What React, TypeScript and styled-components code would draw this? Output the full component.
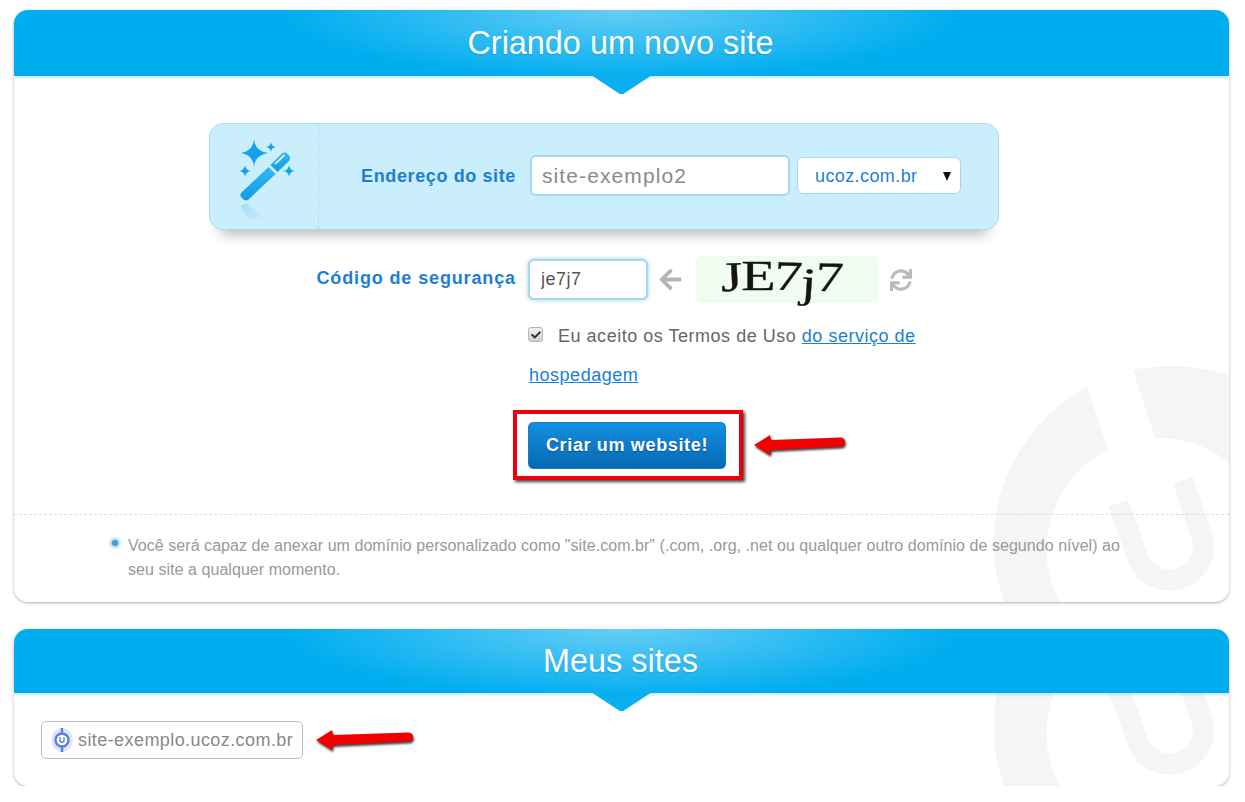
import { createGlobalStyle, styled } from "styled-components";
import { FaArrowLeft, FaCheck, FaSync } from "react-icons/fa";

const GlobalStyle = createGlobalStyle`
  html, body {
    margin: 0;
    padding: 0;
    background: #fff;
    font-family: "Liberation Sans", Arial, sans-serif;
  }
  * {
    box-sizing: border-box;
  }
`;

const captchaGlyphs = [
  { ch: "J", rotate: -2, dy: -3 },
  { ch: "E", rotate: 0, dy: -4 },
  { ch: "7", rotate: 3, dy: -4 },
  { ch: "j", rotate: 3, dy: 3 },
  { ch: "7", rotate: 2, dy: -3 },
];

const Watermark = () => (
  <WatermarkSvg viewBox="989 362 240 240" width="240" height="240">
    <path
      d="M1133 370 A177 177 0 1 1 1087 387 L1108 450 A112 112 0 1 0 1155 438 Z"
      fill="#f5f5f5"
    />
    <path
      d="M1118 503 L1140 563 A34 34 0 0 0 1203 540 L1183 480"
      fill="none"
      stroke="#f5f5f5"
      strokeWidth="21"
    />
  </WatermarkSvg>
);

const RedArrow = ({ width }: { width: number }) => (
  <ArrowSvg width={width + 8} height="30" viewBox={`0 0 ${width + 8} 30`}>
    <path
      d={`M1 15 L17 5 L18 10 L${width - 4} 7.5 Q${width} 8 ${width} 12 Q${width} 16 ${width - 4} 16.5 L18 20 L17 25 Z`}
      fill="#f20000"
    />
  </ArrowSvg>
);

const WandIcon = () => (
  <svg width="90" height="95" viewBox="225 130 90 95">
    <defs>
      <linearGradient id="wandFill" x1="0" y1="0" x2="0" y2="1">
        <stop offset="0" stopColor="#35b6ee" />
        <stop offset="1" stopColor="#0e9de7" />
      </linearGradient>
      <linearGradient id="wandShade" x1="0" y1="0" x2="1" y2="1">
        <stop offset="0" stopColor="#a3dcf7" />
        <stop offset="1" stopColor="#cbeefc" />
      </linearGradient>
    </defs>
    <path
      d="M254 140 Q255 152 268 154 Q255 156 254 168 Q253 156 241 154 Q253 152 254 140 Z"
      fill="#12a3ea"
    />
    <path
      d="M271 143 Q271.6 147.4 276 148 Q271.6 148.6 271 153 Q270.4 148.6 266 148 Q270.4 147.4 271 143 Z"
      fill="#12a3ea"
    />
    <path
      d="M245 166 Q245.6 171.4 251 172 Q245.6 172.6 245 178 Q244.4 172.6 239 172 Q244.4 171.4 245 166 Z"
      fill="#12a3ea"
    />
    <path
      d="M289 166 Q289.6 171.4 295 172 Q289.6 172.6 289 178 Q288.4 172.6 283 172 Q288.4 171.4 289 166 Z"
      fill="#12a3ea"
    />
    <path
      d="M241.5 193.5 L268.5 168 L275.5 175 L248.5 200.5 Q245.5 202.5 243 200 L241 198 Q239.5 195.5 241.5 193.5 Z"
      fill="url(#wandFill)"
    />
    <path
      d="M270.5 166 L282 154.5 Q285 152.5 287.5 155 L289 156.5 Q291 159 289 162 L277.5 173 Z"
      fill="url(#wandFill)"
    />
    <path d="M275 165 L284.5 156" stroke="#d6f1fd" strokeWidth="1.8" />
    <path d="M241 208 Q243 204 248 205 L264 220 L248 220 Z" fill="url(#wandShade)" />
  </svg>
);

const SiteIcon = () => (
  <svg width="22" height="26" viewBox="0 0 22 26">
    <ellipse cx="11" cy="13" rx="10.5" ry="12" fill="#dfe4f7" />
    <circle cx="11" cy="13" r="6.5" fill="#fff" stroke="#5b7fdc" strokeWidth="2.4" />
    <path d="M11 1 V6 M11 20 V25" stroke="#5b7fdc" strokeWidth="2.4" />
    <path d="M9 10 V14 Q11 17 13 14 V10" fill="none" stroke="#5b7fdc" strokeWidth="1.4" />
  </svg>
);

export default function App() {
  return (
    <Page>
      <GlobalStyle />
      <Card>
        <Watermark />
        <Header $height={66}>
          <Title>Criando um novo site</Title>
        </Header>
        <Panel>
          <IconCol>
            <WandIcon />
          </IconCol>
          <PanelLabel>Endereço do site</PanelLabel>
          <AddressInput defaultValue="site-exemplo2" />
          <SelectWrap>
            <DomainSelect defaultValue="ucoz.com.br">
              <option>ucoz.com.br</option>
            </DomainSelect>
          </SelectWrap>
        </Panel>
        <SecurityRow>
          <SecurityLabel>Código de segurança</SecurityLabel>
          <CodeInput defaultValue="je7j7" />
          <HintArrow />
          <Captcha>
            <CaptchaWord>
              {captchaGlyphs.map((g, i) => (
                <CaptchaGlyph key={i} $rotate={g.rotate} $dy={g.dy}>
                  {g.ch}
                </CaptchaGlyph>
              ))}
            </CaptchaWord>
          </Captcha>
          <RefreshIcon />
        </SecurityRow>
        <Terms>
          <CheckBox>
            <FaCheck />
          </CheckBox>
          Eu aceito os Termos de Uso <TermsLink href="#">do serviço de hospedagem</TermsLink>
        </Terms>
        <SubmitRow>
          <Highlight>
            <SubmitButton>Criar um website!</SubmitButton>
          </Highlight>
          <RedArrow width={92} />
        </SubmitRow>
        <Note>
          <Bullet />
          <NoteText>
            Você será capaz de anexar um domínio personalizado como "site.com.br" (.com, .org, .net ou
            qualquer outro domínio de segundo nível) ao seu site a qualquer momento.
          </NoteText>
        </Note>
      </Card>

      <Card>
        <Watermark />
        <Header $height={64}>
          <Title>Meus sites</Title>
        </Header>
        <SitesRow>
          <SiteChip>
            <SiteIcon />
            site-exemplo.ucoz.com.br
          </SiteChip>
          <RedArrow width={98} />
        </SitesRow>
      </Card>
    </Page>
  );
}

const Page = styled.div`
  width: 1245px;
  padding: 10px 16px 0 14px;
  display: flex;
  flex-direction: column;
  gap: 27px;
`;

const Card = styled.section`
  position: relative;
  overflow: hidden;
  background: #fff;
  border-radius: 14px;
  box-shadow: 0 1px 3px rgba(0, 0, 0, 0.32);
`;

const WatermarkSvg = styled.svg`
  position: absolute;
  right: 0;
  bottom: 0;
`;

const Header = styled.header<{ $height: number }>`
  position: relative;
  height: ${(p) => p.$height}px;
  display: flex;
  align-items: center;
  justify-content: center;
  padding-right: 2px;
  background:
    radial-gradient(ellipse 340px 70px at 50% 0, rgba(255, 255, 255, 0.4), rgba(255, 255, 255, 0) 100%),
    #00adef;
  box-shadow: 0 2px 3px rgba(0, 120, 180, 0.2);

  &::after {
    content: "";
    position: absolute;
    left: 50%;
    top: 100%;
    width: 58px;
    height: 18px;
    margin-left: -29px;
    background: #0aafef;
    clip-path: polygon(0 0, 100% 0, 53% 100%, 47% 100%);
  }
`;

const Title = styled.h1`
  margin: 0;
  color: #fff;
  font-size: 32.4px;
  font-weight: 400;
  line-height: 1;
  text-shadow: 0 1px 1px rgba(0, 90, 140, 0.25);
`;

const Panel = styled.div`
  position: relative;
  display: flex;
  align-items: center;
  width: 790px;
  height: 107px;
  margin: 47px 0 0 195px;
  background: #cbeefc;
  border: 1px solid #a9dcf2;
  border-radius: 14px;
  box-shadow: 0 16px 14px -12px rgba(0, 0, 0, 0.3);
`;

const IconCol = styled.div`
  display: flex;
  align-items: center;
  width: 109px;
  height: 100%;
  padding-left: 15px;
  border-right: 1px dashed #a6dff5;
`;

const PanelLabel = styled.label`
  width: 197px;
  text-align: right;
  color: #1c7fd0;
  font-size: 18px;
  font-weight: 700;
  letter-spacing: 0.62px;
`;

const AddressInput = styled.input`
  width: 260px;
  height: 41px;
  margin: 0 0 2px 14px;
  padding: 0 10px;
  background: #fff;
  border: 2px solid #a6d7ee;
  border-radius: 6px;
  color: #8a8a8a;
  font-family: inherit;
  font-size: 21px;
  letter-spacing: 1.1px;
  outline: none;
`;

const SelectWrap = styled.div`
  position: relative;
  margin: 0 0 2px 7px;

  &::after {
    content: "";
    position: absolute;
    right: 10px;
    top: 15px;
    border-left: 4.5px solid transparent;
    border-right: 4.5px solid transparent;
    border-top: 9px solid #111;
  }
`;

const DomainSelect = styled.select`
  display: block;
  appearance: none;
  width: 164px;
  height: 37px;
  padding: 0 0 0 17px;
  background: #fff;
  border: 1px solid #a6d7ee;
  border-radius: 6px;
  color: #1c7fd0;
  font-family: inherit;
  font-size: 18px;
  letter-spacing: 0.4px;
  outline: none;
`;

const SecurityRow = styled.div`
  display: flex;
  align-items: center;
  height: 47px;
  margin-top: 26px;
`;

const SecurityLabel = styled.label`
  width: 502px;
  margin-bottom: 2px;
  text-align: right;
  color: #1c7fd0;
  font-size: 18px;
  font-weight: 700;
  letter-spacing: 0.87px;
`;

const CodeInput = styled.input`
  width: 120px;
  height: 41px;
  margin-left: 12px;
  padding: 0 11px;
  background: #fff;
  border: 2px solid #a6d7ee;
  border-radius: 6px;
  box-shadow: 0 0 4px rgba(90, 170, 220, 0.6);
  color: #555;
  font-family: inherit;
  font-size: 18px;
  letter-spacing: 0.5px;
  outline: none;
`;

const HintArrow = styled(FaArrowLeft)`
  width: 25px;
  height: 25px;
  margin-left: 10px;
  color: #b5b5b5;
`;

const Captcha = styled.div`
  display: flex;
  justify-content: center;
  align-items: center;
  width: 182px;
  height: 47px;
  margin-left: 13px;
  background: #f1fcf1;
  border-radius: 5px;
  color: #151515;
  font-family: "Liberation Serif", "Times New Roman", serif;
  font-size: 42px;
  line-height: 42px;
`;

const CaptchaWord = styled.div`
  display: flex;
  transform: translateX(-6px) scaleX(1.34);
  -webkit-text-stroke: 0.3px #151515;
`;

const CaptchaGlyph = styled.span<{ $rotate: number; $dy: number }>`
  display: inline-block;
  margin-right: -1px;
  transform: translateY(${(p) => p.$dy}px) rotate(${(p) => p.$rotate}deg);
`;

const RefreshIcon = styled(FaSync)`
  width: 22px;
  height: 22px;
  margin-left: 12px;
  color: #b9b9b9;
`;

const Terms = styled.p`
  width: 410px;
  margin: 13.5px 0 0 515px;
  color: #666;
  font-size: 18px;
  letter-spacing: 0.52px;
  line-height: 39px;
`;

const CheckBox = styled.span`
  display: inline-flex;
  align-items: center;
  justify-content: center;
  width: 15px;
  height: 15px;
  margin: 0 15px 0 -1px;
  vertical-align: 2px;
  background: linear-gradient(#f2f2f2, #cfcfcf);
  border: 1px solid #b5b5b5;
  border-radius: 3px;
  color: #333;
  font-size: 10px;
`;

const TermsLink = styled.a`
  color: #1c7fd0;
  text-decoration: underline;
`;

const SubmitRow = styled.div`
  display: flex;
  align-items: center;
  margin: 15.5px 0 0 499px;
  gap: 10px;
`;

const Highlight = styled.div`
  width: 230px;
  height: 70px;
  padding: 8px 0 0 11px;
  border: 4px solid #e8000b;
  box-shadow: 2px 2px 3px rgba(0, 0, 0, 0.75);
`;

const SubmitButton = styled.button`
  display: block;
  width: 198px;
  height: 47px;
  padding: 0;
  background: linear-gradient(#148fe0, #0669b4);
  border: 1px solid #0f7fcf;
  border-radius: 5px;
  color: #fff;
  font-family: inherit;
  font-size: 18px;
  font-weight: 700;
  letter-spacing: 0.65px;
  text-shadow: 0 1px 1px rgba(0, 50, 100, 0.5);
`;

const ArrowSvg = styled.svg`
  flex: none;
  filter: drop-shadow(1px 2px 1px rgba(0, 0, 0, 0.75));
`;

const Note = styled.div`
  position: relative;
  display: flex;
  margin-top: 34px;
  padding: 19px 99px 20px 97px;
  border-top: 1px dashed #ddd;
`;

const Bullet = styled.span`
  flex: none;
  width: 6px;
  height: 6px;
  margin: 6px 10px 0 1px;
  border-radius: 50%;
  background: #3d9fe0;
  box-shadow: 0 0 3px 2px #9dd3f3;
`;

const NoteText = styled.p`
  margin: 0;
  color: #999;
  font-size: 16px;
  letter-spacing: 0.05px;
  line-height: 24px;
`;

const SitesRow = styled.div`
  position: relative;
  display: flex;
  align-items: center;
  gap: 12px;
  padding: 28px 0 27px 27px;
`;

const SiteChip = styled.div`
  display: flex;
  align-items: center;
  gap: 5px;
  width: 262px;
  height: 38px;
  padding-left: 9px;
  background: #fff;
  border: 1px solid #bbb;
  border-radius: 5px;
  color: #888;
  font-size: 18px;
  letter-spacing: 0.42px;
`;
